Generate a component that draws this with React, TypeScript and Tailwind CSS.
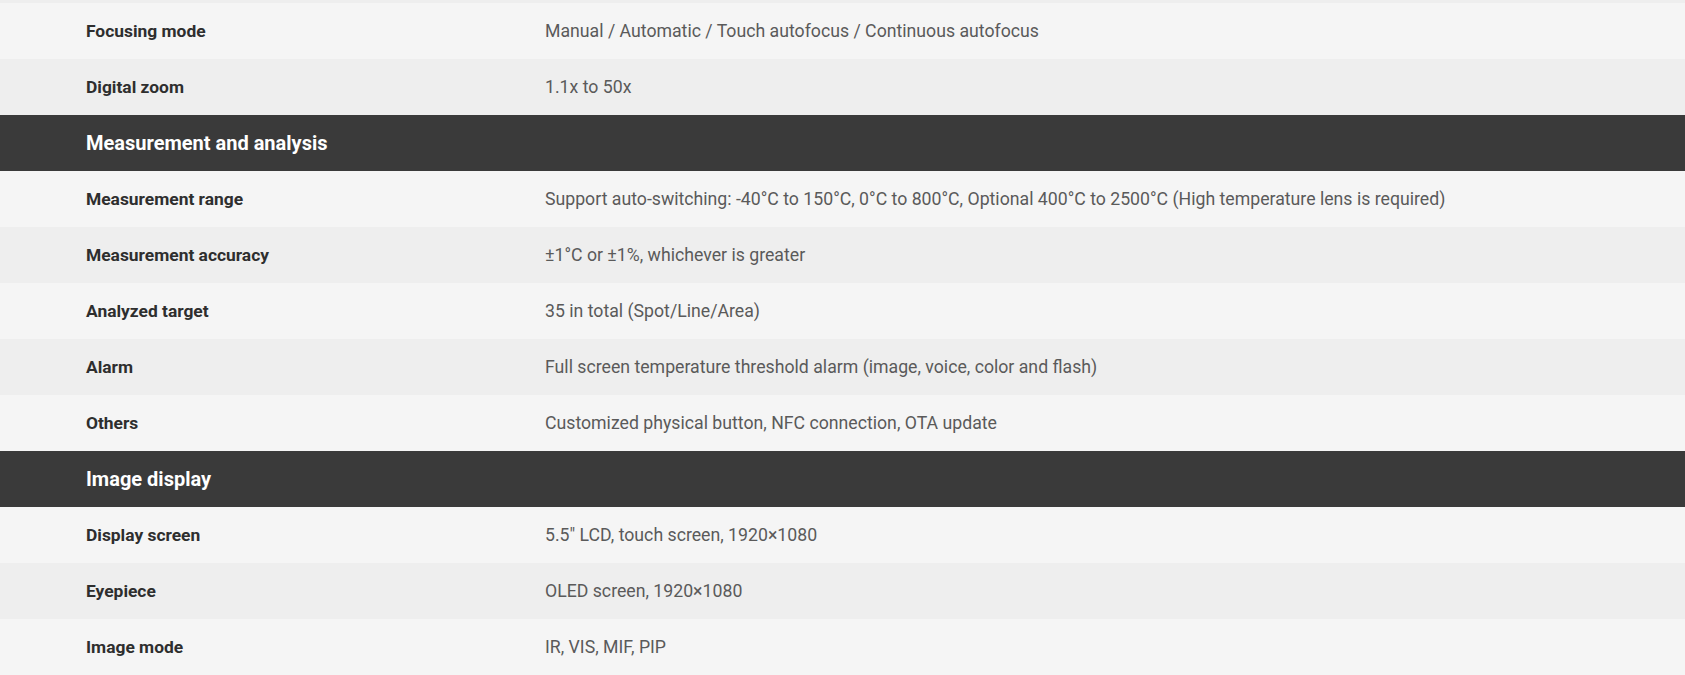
type Row = { label: string; value?: string; header?: boolean };

const rows: Row[] = [
  { label: "Focusing mode", value: "Manual / Automatic / Touch autofocus / Continuous autofocus" },
  { label: "Digital zoom", value: "1.1x to 50x" },
  { label: "Measurement and analysis", header: true },
  {
    label: "Measurement range",
    value:
      "Support auto-switching: -40°C to 150°C, 0°C to 800°C, Optional 400°C to 2500°C (High temperature lens is required)",
  },
  { label: "Measurement accuracy", value: "±1°C or ±1%, whichever is greater" },
  { label: "Analyzed target", value: "35 in total (Spot/Line/Area)" },
  { label: "Alarm", value: "Full screen temperature threshold alarm (image, voice, color and flash)" },
  { label: "Others", value: "Customized physical button, NFC connection, OTA update" },
  { label: "Image display", header: true },
  { label: "Display screen", value: "5.5″ LCD, touch screen, 1920×1080" },
  { label: "Eyepiece", value: "OLED screen, 1920×1080" },
  { label: "Image mode", value: "IR, VIS, MIF, PIP" },
];

const SpecRow = ({ row, odd }: { row: Row; odd: boolean }) => {
  if (row.header) {
    return (
      <div className="flex h-[56px] items-center bg-[#3a3a3a] pl-[86px]">
        <span className="text-[20px] font-bold text-white">{row.label}</span>
      </div>
    );
  }
  return (
    <div className={`flex h-[56px] items-center pl-[86px] ${odd ? "bg-[#eeeeee]" : "bg-[#f5f5f5]"}`}>
      <span className="w-[459px] shrink-0 text-[17.4px] font-bold text-[#2e2e2e]">{row.label}</span>
      <span className="text-[17.7px] text-[#5a5a5a]">{row.value}</span>
    </div>
  );
};

export default function App() {
  let stripe = 0;
  return (
    <div className="min-h-screen w-full bg-[#f5f5f5] font-['Roboto',sans-serif]">
      <div className="h-[3px] bg-[#eeeeee]" />
      {rows.map((row, i) => {
        if (row.header) {
          stripe = 0;
          return <SpecRow key={i} row={row} odd={false} />;
        }
        const odd = stripe % 2 === 1;
        stripe++;
        return <SpecRow key={i} row={row} odd={odd} />;
      })}
    </div>
  );
}
